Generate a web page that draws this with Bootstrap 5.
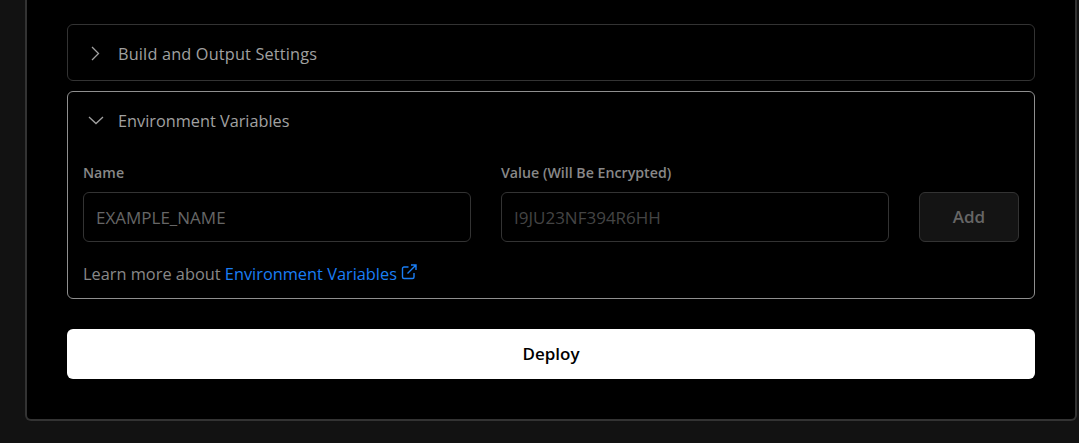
<!DOCTYPE html>
<html lang="en">

<head>
  <meta charset="UTF-8">
  <meta name="viewport" content="width=device-width, initial-scale=1.0">
  <title>Deploy</title>
  <link href="https://cdn.jsdelivr.net/npm/bootstrap@5.3.3/dist/css/bootstrap.min.css" rel="stylesheet">
  <style>
    html, body { height: 443px; overflow: hidden; }
    body { background: #121212; font-family: "Open Sans", "Noto Sans", sans-serif; padding: 0 2px 22px 25px; }
    .deploy-panel { background: #000; border: 2px solid #333; border-top: 0; border-radius: 0 0 6px 6px; padding: 24px 40px 40px; height: 421px; }
    .fold-box { background: #000; border: 1px solid #333; border-radius: 6px; }
    .fold-box.is-open { border-color: #8f8f8f; margin-top: 10px; height: 208px; }
    .fold-head { height: 55px; padding-top: 3px; padding-left: 20px; color: #a1a1a1; font-size: 16.3px; gap: 14px; }
    .fold-head svg { flex: none; }
    .fold-wide { letter-spacing: .17px; }
    .fold-body { padding: 16px 15px 0; }
    .env-label { color: #888; font-size: 14.2px; font-weight: 600; line-height: 20px; margin-bottom: 9px; }
    .env-input, .env-input:focus { background: #000; border: 1px solid #333; border-radius: 6px; height: 50px; padding: 0 12px; font-size: 17px; box-shadow: none; }
    .env-input::placeholder { color: #666; opacity: 1; }
    .env-input.is-secret::placeholder { color: #444; }
    .env-col { width: 388px; }
    .env-add { width: 100px; height: 50px; background: #141414; border: 1px solid #333; border-radius: 6px; color: #666; font-weight: 600; font-size: 17px; }
    .env-add:disabled { background: #141414; border-color: #333; color: #666; opacity: 1; }
    .env-note { color: #888; font-size: 16.35px; line-height: 24px; margin-top: 20px; }
    .env-note a { color: #1a7ef5; text-decoration: none; }
    .deploy-btn, .deploy-btn:hover { background: #fff; color: #000; border: 0; border-radius: 6px; height: 50px; margin-top: 30px; font-weight: 600; font-size: 17px; }
  </style>
</head>

<body>
  <div class="deploy-panel">
    <div class="fold-box">
      <div class="fold-head d-flex align-items-center">
        <svg width="16" height="16" viewBox="0 0 16 16" fill="none" stroke="#a1a1a1" stroke-width="1.3"><path d="M4 1 10.500 7.500 4 14"/></svg>
        <span class="fold-wide">Build and Output Settings</span>
      </div>
    </div>
    <div class="fold-box is-open">
      <div class="fold-head d-flex align-items-center">
        <svg width="16" height="16" viewBox="0 0 16 16" fill="none" stroke="#a1a1a1" stroke-width="1.3"><path d="M1 4l7 6.500L15 4"/></svg>
        <span>Environment Variables</span>
      </div>
      <div class="fold-body">
        <div class="d-flex align-items-end">
          <div class="env-col">
            <div class="env-label">Name</div>
            <input class="form-control env-input" placeholder="EXAMPLE_NAME">
          </div>
          <div class="env-col ms-auto">
            <div class="env-label">Value (Will Be Encrypted)</div>
            <input class="form-control env-input is-secret" placeholder="I9JU23NF394R6HH">
          </div>
          <button class="btn env-add ms-auto" disabled>Add</button>
        </div>
        <div class="env-note">Learn more about <a href="#">Environment Variables
          <svg width="16" height="16" viewBox="0 0 16 16" fill="none" stroke="#1a7ef5" stroke-width="1.400" class="align-baseline"><path d="M7.500 3H3a1.500 1.500 0 0 0-1.500 1.500V13A1.500 1.500 0 0 0 3 14.500h8.500A1.500 1.500 0 0 0 13 13V9M6.500 9.500 15 1M10 1h5v5"/></svg></a></div>
      </div>
    </div>
    <button class="btn deploy-btn w-100">Deploy</button>
  </div>
</body>

</html>
